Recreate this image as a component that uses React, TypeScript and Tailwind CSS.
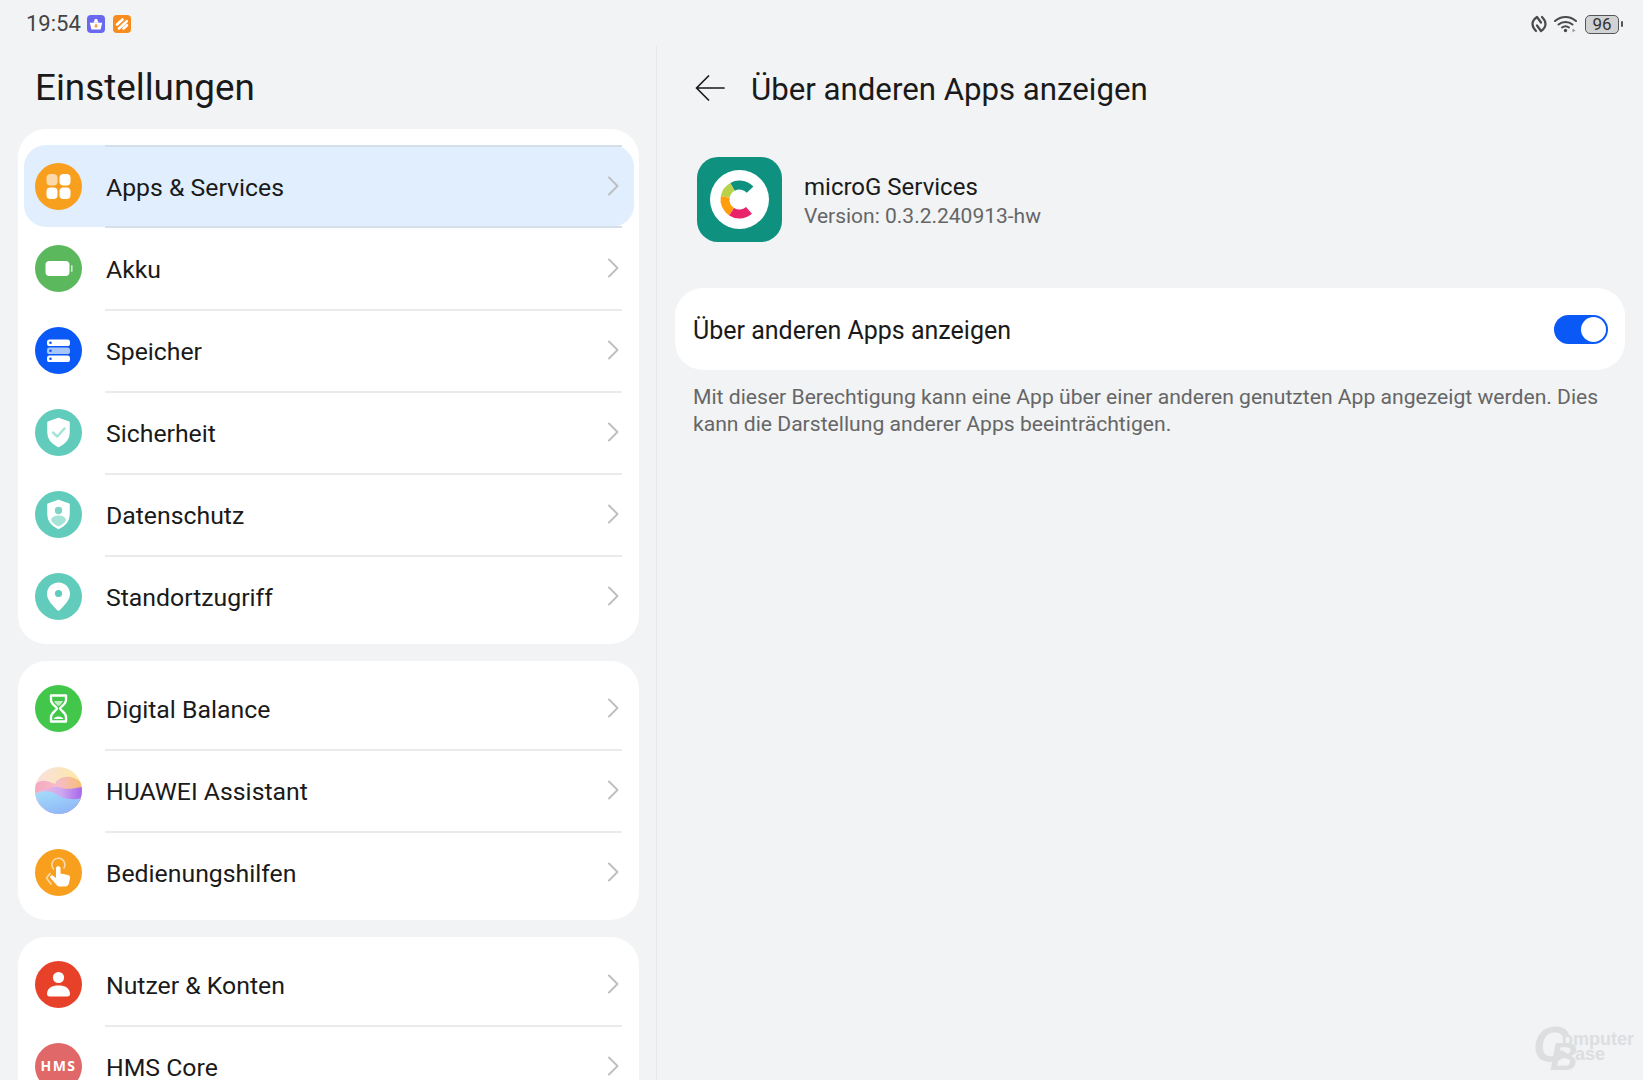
import React from "react";

const pt = (r: number, a: number) => {
  const t = ((a - 90) * Math.PI) / 180;
  return `${(42.5 + r * Math.cos(t)).toFixed(2)} ${(42.5 + r * Math.sin(t)).toFixed(2)}`;
};
const arc = (a: number, b: number) => `M${pt(14.5, a)} A14.5 14.5 0 ${b - a > 180 ? 1 : 0} 1 ${pt(14.5, b)}`;

function AppLogo() {
  return (
    <svg viewBox="0 0 85 85" className="w-[85px] h-[85px] shrink-0">
      <rect width="85" height="85" rx="21" fill="#0e917f" />
      <circle cx="42.5" cy="42.5" r="29.5" fill="#fff" />
      <g fill="none" strokeWidth="9">
        <path d={arc(-29, 47)} stroke="#0e917f" />
        <path d={arc(-80, -29)} stroke="#b9d24a" />
        <path d={arc(213, 280)} stroke="#ff9d0c" />
        <path d={arc(139, 213)} stroke="#e9246a" />
      </g>
    </svg>
  );
}

function Circle({ bg, children }: { bg: string; children: React.ReactNode }) {
  return (
    <div className={`w-[47px] h-[47px] rounded-full shrink-0 flex items-center justify-center ${bg}`}>
      <svg viewBox="0 0 47 47" className="w-[47px] h-[47px]">{children}</svg>
    </div>
  );
}

const AppsIcon = () => (
  <Circle bg="bg-[#f89f1e]">
    <rect x="11.5" y="11" width="11" height="11.5" rx="4" fill="#fcd9a8" />
    <rect x="24.5" y="11" width="11" height="11.5" rx="4" fill="#fff" />
    <rect x="11.5" y="24.5" width="11" height="11.5" rx="4" fill="#fff" />
    <rect x="24.5" y="24.5" width="11" height="11.5" rx="4" fill="#fff" />
  </Circle>
);
const BatteryIcon = () => (
  <Circle bg="bg-[#5cb85c]">
    <rect x="10.5" y="16" width="24" height="15" rx="4" fill="#fff" />
    <rect x="36" y="20" width="1.6" height="7" rx="0.8" fill="#cfeacf" />
  </Circle>
);
const StorageIcon = () => (
  <Circle bg="bg-[#0a59f7]">
    <rect x="12" y="12.5" width="23" height="6.5" rx="2.6" fill="#fff" />
    <rect x="12" y="20.5" width="23" height="6.5" rx="2.6" fill="#a9c6fb" />
    <rect x="12" y="28.5" width="23" height="6.5" rx="2.6" fill="#fff" />
    <circle cx="15.5" cy="15.7" r="1.3" fill="#0a59f7" />
    <circle cx="15.5" cy="23.7" r="1.3" fill="#0a59f7" />
    <circle cx="15.5" cy="31.7" r="1.3" fill="#0a59f7" />
  </Circle>
);
const shield = "M23.5 9.5 L34 13.2 V23.5 C34 30.5 28.8 35 23.5 37.5 C18.2 35 13 30.5 13 23.5 V13.2 Z";
const SecurityIcon = () => (
  <Circle bg="bg-[#61ccbb]">
    <path d={shield} fill="#fff" strokeLinejoin="round" stroke="#fff" strokeWidth="1.5" />
    <path d="M18 23.5 L22.3 27.5 L29.5 19.5" fill="none" stroke="#a4e3d8" strokeWidth="2.4" strokeLinecap="round" strokeLinejoin="round" />
  </Circle>
);
const PrivacyIcon = () => (
  <Circle bg="bg-[#61ccbb]">
    <path d={shield} fill="#fff" strokeLinejoin="round" stroke="#fff" strokeWidth="1.5" />
    <circle cx="23.5" cy="19.5" r="3.7" fill="#7ed5c7" />
    <path d="M16 29 C17 25.5 20 24.5 23.5 24.5 C27 24.5 30 25.5 31 29 C29.8 32 27 34.2 23.5 35.2 C20 34.2 17.2 32 16 29 Z" fill="#a4e3d8" />
  </Circle>
);
const LocationIcon = () => (
  <Circle bg="bg-[#61ccbb]">
    <path d="M23.5 9.5 C30 9.5 35 14.5 35 21 C35 27.5 28 33.5 25 37 C24.2 38 22.8 38 22 37 C19 33.5 12 27.5 12 21 C12 14.5 17 9.5 23.5 9.5 Z" fill="#fff" />
    <circle cx="23.5" cy="20.5" r="3.6" fill="#61ccbb" />
  </Circle>
);
const HourglassIcon = () => (
  <Circle bg="bg-[#43c74a]">
    <path d="M16 10.5 H31 V15 C31 19 26.5 21 25 23.5 C26.5 26 31 28 31 32 V36.5 H16 V32 C16 28 20.5 26 22 23.5 C20.5 21 16 19 16 15 Z" fill="none" stroke="#fff" strokeWidth="2.4" strokeLinejoin="round" />
    <path d="M19 16 H28 C27 18.5 25 20 23.5 21 C22 20 20 18.5 19 16 Z" fill="#bfeec2" />
    <path d="M18.5 34 C19.5 30.5 27.5 30.5 28.5 34 Z" fill="#fff" />
  </Circle>
);
const AssistantIcon = () => (
  <div className="w-[47px] h-[47px] rounded-full shrink-0 overflow-hidden">
    <svg viewBox="0 0 47 47" className="w-[47px] h-[47px]">
      <defs>
        <linearGradient id="as0" x1="0" y1="0" x2="1" y2="0.3">
          <stop offset="0" stopColor="#f8dfe4" />
          <stop offset="1" stopColor="#fde9a0" />
        </linearGradient>
        <linearGradient id="as1" x1="0" y1="0" x2="1" y2="0">
          <stop offset="0" stopColor="#f4a9c0" />
          <stop offset="0.5" stopColor="#f6bcc8" />
          <stop offset="1" stopColor="#f7bd72" />
        </linearGradient>
        <linearGradient id="as2" x1="0" y1="0" x2="1" y2="0">
          <stop offset="0" stopColor="#f2bdd3" />
          <stop offset="0.55" stopColor="#cfa9f0" />
          <stop offset="1" stopColor="#a667ea" />
        </linearGradient>
        <linearGradient id="as3" x1="0" y1="0" x2="0.5" y2="1">
          <stop offset="0" stopColor="#a5def9" />
          <stop offset="1" stopColor="#8fb8f8" />
        </linearGradient>
      </defs>
      <rect width="47" height="47" fill="url(#as0)" />
      <path d="M0 17 C8 11 14 15 20 17 C23 9 36 6 47 16 V47 H0 Z" fill="url(#as1)" />
      <path d="M0 26 C10 23 18 18 27 21 C33 23 40 21 47 20 V47 H0 Z" fill="url(#as2)" />
      <path d="M0 27 C8 23 15 24 21 27 C27 31 35 34 47 31 V47 H0 Z" fill="url(#as3)" />
    </svg>
  </div>
);
const TouchIcon = () => (
  <Circle bg="bg-[#f89f1e]">
    <path d="M18.5 20 A6.5 6.5 0 1 1 29 19" fill="none" stroke="#fcd9a8" strokeWidth="1.6" strokeLinecap="round" />
    <path d="M21 19 C21 16.5 25.5 16.5 25.5 19 V24.5 L33 26 C34.5 26.4 35.3 27.5 35 29 L34 34 C33.6 36 32 37.5 30 37.5 H25 C23.5 37.5 22.3 36.8 21.4 35.7 L15.5 29 C14.2 27.5 16.5 25.4 18 26.7 L21 29 Z" fill="#fff" />
    <path d="M15 24.5 L11.5 29 L16 35" fill="none" stroke="#fcd9a8" strokeWidth="1.6" strokeLinecap="round" />
  </Circle>
);
const UserIcon = () => (
  <Circle bg="bg-[#e8412a]">
    <circle cx="23.5" cy="16.5" r="5.6" fill="#fff" />
    <path d="M12 33 C12 27 17 24.5 23.5 24.5 C30 24.5 35 27 35 33 C35 34.5 34 35.5 32.5 35.5 H14.5 C13 35.5 12 34.5 12 33 Z" fill="#fff" />
  </Circle>
);
const HmsIcon = () => (
  <div className="w-[47px] h-[47px] rounded-full shrink-0 bg-[#e06868] flex items-center justify-center">
    <span className="text-white font-bold text-[14px] tracking-[1.5px] leading-none [font-family:'Noto_Sans',sans-serif]">HMS</span>
  </div>
);

function Row({ icon, label, active, first }: { icon: React.ReactNode; label: string; active?: boolean; first?: boolean }) {
  return (
    <div className={`relative h-[82px] flex items-center pl-[11px] pr-[15px] rounded-[22px] ${active ? "bg-[#e0eefd]" : ""}`}>
      {!first && <div className="absolute left-[81px] right-[12px] top-0 h-[2px] bg-[#e9ebed]" />}
      {active && <div className="absolute left-[81px] right-[12px] top-0 h-[2px] bg-[#d3dfea]" />}
      {active && <div className="absolute left-[81px] right-[12px] bottom-[-1px] h-[2px] z-10 bg-[#d6e0ea]" />}
      {icon}
      <span className="ml-[24px] flex-1 pt-[3px] text-[24.8px] text-[#1a1a1a] whitespace-nowrap">{label}</span>
      <svg viewBox="0 0 12 20" className="w-[12px] h-[20px] shrink-0" fill="none" stroke="#bcbfc2" strokeWidth="1.9" strokeLinecap="round" strokeLinejoin="round">
        <path d="M2 1.5 L10.5 10 L2 18.5" />
      </svg>
    </div>
  );
}

export default function App() {
  return (
    <div className="relative w-[1643px] h-[1080px] overflow-hidden bg-[#f1f3f5] [font-family:Roboto,sans-serif]">
      {/* status bar */}
      <div className="h-[46px] flex items-center justify-between pt-[2px] pl-[26px] pr-[20px]">
        <div className="flex items-center">
          <span className="text-[22px] text-[#444] leading-none w-[61px]">19:54</span>
          <svg viewBox="0 0 18 18" className="w-[18px] h-[18px]">
            <rect width="18" height="18" rx="4" fill="#6a68f0" />
            <path d="M2.8 7.8 H15.2 L13.6 14.5 H4.4 Z" fill="#fff" />
            <path d="M6.3 7.8 L8 4 H10 L11.7 7.8" fill="#fff" />
            <path d="M9 8.8 C10.5 10 10.8 11 10.5 11.8 C10.2 12.8 7.8 12.8 7.5 11.8 C7.2 11 7.8 10 9 8.8 Z" fill="#f7a14a" />
          </svg>
          <svg viewBox="0 0 18 18" className="w-[18px] h-[18px] ml-[8px]">
            <rect width="18" height="18" rx="4" fill="#f98a1c" />
            <path d="M4 9.5 L9.5 4.5 M6 13.5 L13.8 6.2 M10.5 13.5 L14 10.2" fill="none" stroke="#fff" strokeWidth="2.6" strokeLinecap="round" />
          </svg>
        </div>
        <div className="flex items-center">
          <svg viewBox="0 0 16 18" className="w-[16px] h-[18px]" fill="none" stroke="#4a4a4a" strokeWidth="2.2" strokeLinecap="round" strokeLinejoin="round">
            <path d="M10 7.5 L6 2 C3 4 1.5 6.5 1.5 9 C1.5 11.5 3 14 5 16" />
            <path d="M6 10.5 L10 16 C13 14 14.5 11.5 14.5 9 C14.5 6.5 13 4 11 2" />
          </svg>
          <svg viewBox="0 0 23 18" className="w-[23px] h-[18px] ml-[7px]" fill="none" stroke="#4a4a4a" strokeWidth="2" strokeLinecap="round">
            <path d="M1 6 C7 0.5 16 0.5 22 6" />
            <path d="M4.5 9.5 C8.5 6 14.5 6 18.5 9.5" />
            <path d="M8 12.5 C10 11 13 11 15 12.5" />
            <circle cx="11.5" cy="15.5" r="1.7" fill="#4a4a4a" stroke="none" />
            <path d="M18.5 13.5 L21.5 15.5 L18.5 17.5 Z" fill="#9a9a9a" stroke="none" />
          </svg>
          <div className="ml-[8px] w-[34px] h-[19px] rounded-[5px] border-[1.5px] border-[#555] bg-[#d0d2d4] flex items-center justify-center text-[17px] leading-none text-[#333]">96</div>
          <div className="ml-[2px] w-[2px] h-[6px] bg-[#555] rounded-[1px]" />
        </div>
      </div>

      <div className="flex h-[1034px]">
        {/* left */}
        <div className="w-[657px] shrink-0 border-r border-[#e6e8ea] pl-[18px] pr-[17px]">
          <h1 className="h-[83px] pl-[17px] pt-[19px] text-[36.8px] leading-[46px] font-normal text-[#1a1a1a]">Einstellungen</h1>
          <div className="flex flex-col gap-[17px]">
            <div className="bg-white rounded-[28px] pl-[6px] pr-[5px] pt-[16px] pb-[7px]">
              <Row icon={<AppsIcon />} label="Apps & Services" active first />
              <Row icon={<BatteryIcon />} label="Akku" first />
              <Row icon={<StorageIcon />} label="Speicher" />
              <Row icon={<SecurityIcon />} label="Sicherheit" />
              <Row icon={<PrivacyIcon />} label="Datenschutz" />
              <Row icon={<LocationIcon />} label="Standortzugriff" />
            </div>
            <div className="bg-white rounded-[28px] pl-[6px] pr-[5px] pt-[6px] pb-[7px]">
              <Row icon={<HourglassIcon />} label="Digital Balance" first />
              <Row icon={<AssistantIcon />} label="HUAWEI Assistant" />
              <Row icon={<TouchIcon />} label="Bedienungshilfen" />
            </div>
            <div className="bg-white rounded-[28px] pl-[6px] pr-[5px] pt-[6px] pb-[7px]">
              <Row icon={<UserIcon />} label="Nutzer & Konten" first />
              <Row icon={<HmsIcon />} label="HMS Core" />
            </div>
          </div>
        </div>

        {/* right */}
        <div className="flex-1 pl-[18px] pr-[18px]">
          <div className="h-[83px] flex items-center pl-[20px]">
            <svg viewBox="0 0 30 26" className="w-[30px] h-[26px] shrink-0" fill="none" stroke="#1a1a1a" strokeWidth="1.7" strokeLinecap="round" strokeLinejoin="round">
              <path d="M29 13 H1.5 M13.5 1 L1.5 13 L13.5 25" />
            </svg>
            <h2 className="ml-[26px] pt-[6px] text-[31.2px] font-normal text-[#1a1a1a] whitespace-nowrap">Über anderen Apps anzeigen</h2>
          </div>
          <div className="mt-[28px] flex items-center pl-[22px]">
            <AppLogo />
            <div className="ml-[22px] pt-[2px]">
              <div className="text-[24px] leading-[30px] text-[#1a1a1a]">microG Services</div>
              <div className="text-[21px] leading-[28px] text-[#666]">Version: 0.3.2.240913-hw</div>
            </div>
          </div>
          <div className="mt-[46px] h-[82px] rounded-[28px] bg-white flex items-center justify-between pl-[18px] pr-[17px]">
            <span className="text-[25px] pt-[4px] text-[#1a1a1a]">Über anderen Apps anzeigen</span>
            <div className="w-[54px] h-[29px] rounded-full bg-[#0a59f7] flex items-center justify-end pr-[2px]">
              <div className="w-[25px] h-[25px] rounded-full bg-white" />
            </div>
          </div>
          <p className="mt-[13px] pl-[18px] pr-[8px] text-[21.13px] leading-[27px] text-[#666]">
            Mit dieser Berechtigung kann eine App über einer anderen genutzten App angezeigt werden. Dies kann die Darstellung anderer Apps beeinträchtigen.
          </p>
        </div>
      </div>

      {/* watermark */}
      <div className="absolute left-[1533px] top-[1026px] w-[104px] h-[46px] text-[#dcdee0] font-bold [font-family:'Liberation_Sans',sans-serif]">
        <span className="absolute left-0 top-[-6px] text-[50px] leading-none italic">C</span>
        <span className="absolute left-[17px] top-[12px] text-[38px] leading-none italic">B</span>
        <span className="absolute left-[29px] top-[4px] text-[18px] leading-none">omputer</span>
        <span className="absolute left-[42px] top-[19px] text-[18px] leading-none">ase</span>
      </div>
    </div>
  );
}
